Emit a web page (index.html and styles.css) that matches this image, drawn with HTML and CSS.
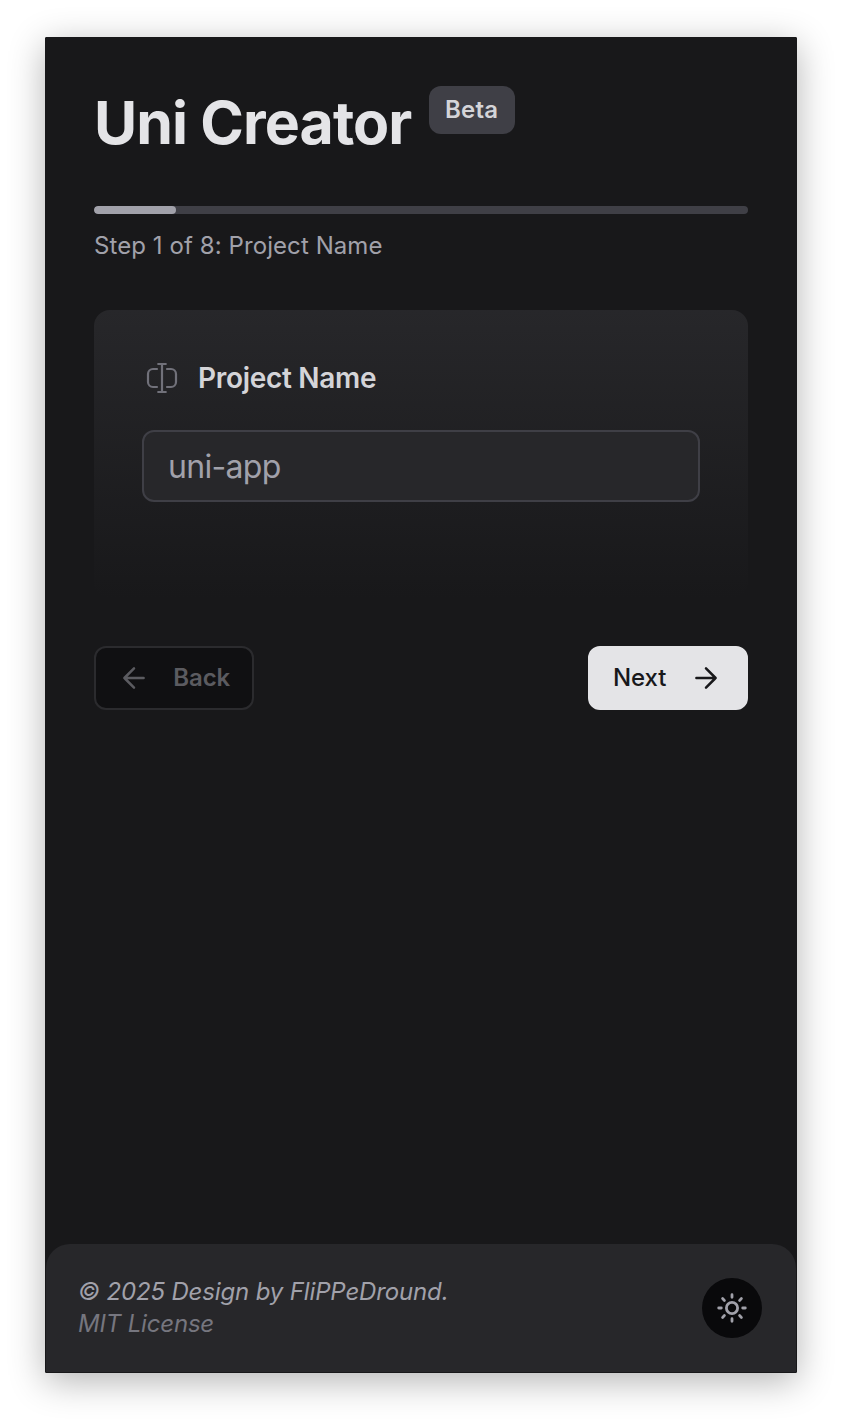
FILE: index.html
```html
<!DOCTYPE html>
<html lang="en">
<head>
<meta charset="utf-8">
<title>Uni Creator</title>
<link rel="stylesheet" href="styles.css">
</head>
<body>
<div class="window">
  <main class="content">
    <header class="header">
      <h1 class="title">Uni Creator</h1>
      <span class="badge">Beta</span>
    </header>
    <div class="progress"><div class="progress-value" style="width:12.5%"></div></div>
    <p class="step">Step 1 of 8: Project Name</p>
    <section class="card">
      <div class="label">
        <svg class="label-icon" viewBox="0 0 40 40" fill="none" stroke="currentColor" stroke-width="2.2" stroke-linecap="round">
          <path d="M20 6v28M16.2 6h7.6M16.2 34h7.6"/>
          <path d="M15 11H11a5 5 0 0 0-5 5v8a5 5 0 0 0 5 5h4M25 11h4a5 5 0 0 1 5 5v8a5 5 0 0 1-5 5h-4"/>
        </svg>
        <span class="label-text">Project Name</span>
      </div>
      <div class="input"><span class="placeholder">uni-app</span></div>
    </section>
    <nav class="actions">
      <button class="button back" type="button" disabled>
        <svg class="arrow" viewBox="0 0 24 24"><path d="M21.6 12H2.4M12 2.4L2.4 12l9.6 9.6"/></svg>
        <span class="back-text">Back</span>
      </button>
      <button class="button next" type="button">
        <span class="next-text">Next</span>
        <svg class="arrow" viewBox="0 0 24 24"><path d="M2.4 12h19.2M12 2.4l9.6 9.6-9.6 9.6"/></svg>
      </button>
    </nav>
  </main>
  <footer class="footer">
    <div class="credits">
      <div class="copyright">© 2025 Design by FliPPeDround.</div>
      <div class="license">MIT License</div>
    </div>
    <button class="theme" type="button" aria-label="Toggle theme">
      <svg class="sun" viewBox="0 0 32 32" fill="none" stroke="currentColor" stroke-width="2.8" stroke-linecap="round">
        <circle cx="16" cy="16" r="5.6"/>
        <path d="M16 2.7v2.6M16 26.7v2.6M2.7 16h2.6M26.7 16h2.6M6.6 6.6l1.8 1.8M23.6 23.6l1.8 1.8M6.6 25.4l1.8-1.8M23.6 8.4l1.8-1.8"/>
      </svg>
    </button>
  </footer>
</div>
</body>
</html>
```
FILE: styles.css
```css
* { box-sizing: border-box; }
body {
  margin: 0;
  padding: 37px 45px 53px;
  background: #fff;
  font-family: Inter, "Liberation Sans", sans-serif;
}
.window {
  height: 1336px;
  display: flex;
  flex-direction: column;
  justify-content: space-between;
  border: 1px solid #18181a;
  border-radius: 1px;
  background: #18181a;
  box-shadow: 0 8px 36px rgba(0, 0, 0, .3);
}
.content { padding: 48px 48px 0; }
.header { display: flex; align-items: flex-start; justify-content: flex-start; height: 120px; }
.title { margin: 0; width: 335px; color: #e4e4e7; font-size: 59px; line-height: 74px; font-weight: 700; letter-spacing: -.9px; white-space: nowrap; }
.badge { width: 86px; height: 48px; padding-left: 16px; border-radius: 12px; background: #3f3f46; color: #d4d4d8; font-size: 24px; line-height: 48px; font-weight: 600; letter-spacing: .2px; }
.progress { height: 8px; border-radius: 4px; background: #3f3f46; overflow: hidden; }
.progress-value { height: 8px; border-radius: 4px; background: #a1a1aa; }
.step { margin: 16px 0 0; height: 32px; color: #a1a1aa; font-size: 24px; line-height: 32px; letter-spacing: .08px; white-space: nowrap; }
.card { margin-top: 48px; height: 288px; padding: 48px; border-radius: 16px; background: linear-gradient(#27272a, #18181a); }
.label { display: flex; align-items: center; height: 40px; gap: 16px; }
.label-icon { width: 40px; height: 40px; color: #71717a; }
.label-text { color: #d4d4d8; font-size: 28px; line-height: 40px; font-weight: 600; letter-spacing: -.3px; white-space: nowrap; }
.input { margin-top: 32px; height: 72px; padding: 0 24px; border: 2px solid #3f3f46; border-radius: 12px; background: #27272a; font-size: 32px; line-height: 70px; letter-spacing: -.7px; color: #a1a1aa; }
.actions { margin-top: 48px; display: flex; justify-content: space-between; }
.button { width: 160px; height: 64px; display: flex; align-items: center; justify-content: space-between; border: 2px solid; border-radius: 12px; font: 600 24px/32px Inter, "Liberation Sans", sans-serif; }
.back { padding: 0 22px 0 26px; color: #5b5b60; background: #101012; border-color: #2b2b2e; letter-spacing: -.15px; }
.next { padding: 0 28px 0 23px; color: #18181b; background: #e4e4e7; border-color: #e4e4e7; font-weight: 500; letter-spacing: -.1px; }
.arrow { width: 24px; height: 24px; fill: none; stroke: currentColor; stroke-width: 2.5; stroke-linecap: round; stroke-linejoin: round; }
.footer { height: 128px; padding: 0 34px 0 32px; display: flex; align-items: center; justify-content: space-between; border-radius: 24px 24px 0 0; background: #27272a; }
.credits { font-size: 24px; line-height: 32px; font-style: italic; letter-spacing: -.14px; white-space: nowrap; }
.copyright { color: #a1a1aa; }
.license { color: #76767f; letter-spacing: -.18px; }
.theme { width: 60px; height: 60px; padding: 0; display: grid; place-items: center; border: 0; border-radius: 50%; background: #09090b; color: #a1a1aa; }
.sun { width: 32px; height: 32px; }
```
